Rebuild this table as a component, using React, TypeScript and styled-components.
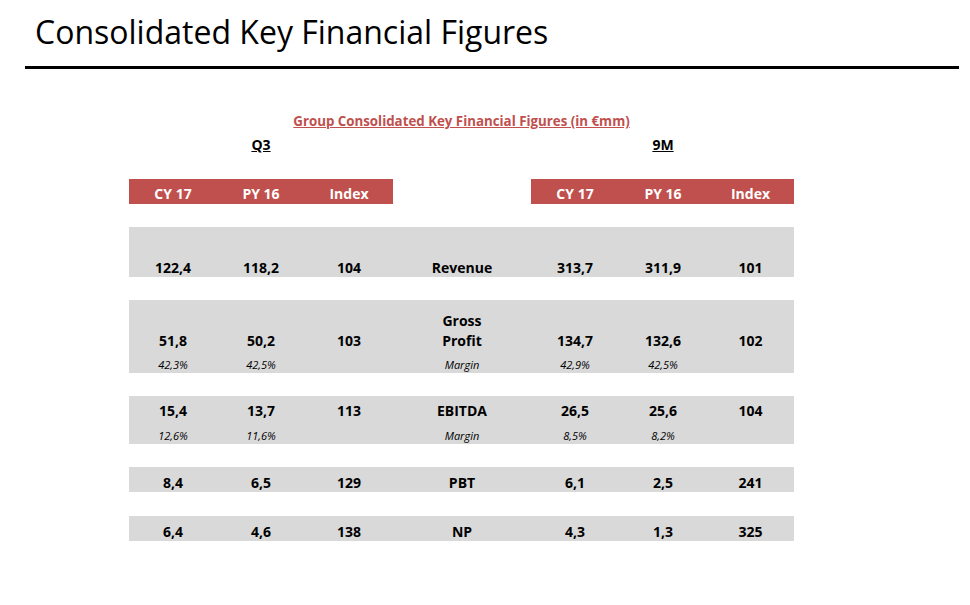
import styled, { createGlobalStyle } from "styled-components";

const RED = "#c0504d";
const GRAY = "#d9d9d9";
// 3 Q3 columns, label column, 3 9M columns
const COLS = "88px 88px 88px 138px 88px 88px 87px";

const GlobalStyle = createGlobalStyle`
  body {
    margin: 0;
    background: #fff;
    color: #000;
    font-family: "Open Sans", Lato, sans-serif;
  }
`;

const Page = styled.main`
  padding: 0 11px 40px 25px;
`;

const Title = styled.h1`
  margin: 0;
  padding: 16px 0 0 10px;
  font-size: 32px;
  font-weight: 400;
  line-height: 1;
`;

const Rule = styled.hr`
  margin: 18px 0 0;
  border: 0;
  height: 3px;
  background: #000;
`;

const Table = styled.section`
  width: 665px;
  margin-left: 104px;
`;

const Caption = styled.h2`
  margin: 45px 0 0;
  text-align: center;
  font-size: 13.3px;
  font-weight: 700;
  line-height: 14px;
  color: ${RED};
  text-decoration: underline;
`;

const Row = styled.div<{ $h: number; $gap?: number }>`
  display: grid;
  grid-template-columns: ${COLS};
  height: ${(p) => p.$h}px;
  margin-top: ${(p) => p.$gap ?? 0}px;
`;

const Period = styled.div<{ $col: number }>`
  grid-column: ${(p) => p.$col};
  text-align: center;
  font-size: 14px;
  font-weight: 700;
  line-height: 14px;
  text-decoration: underline;
`;

const HeadCell = styled.div<{ $fill: boolean }>`
  display: flex;
  align-items: flex-end;
  justify-content: center;
  padding-bottom: 3px;
  background: ${(p) => (p.$fill ? RED : "transparent")};
  color: #fff;
  font-size: 14px;
  font-weight: 700;
  line-height: 1;
`;

const Block = styled.div<{ $gap: number }>`
  margin-top: ${(p) => p.$gap}px;
  background: ${GRAY};
`;

const Cell = styled.div<{ $italic?: boolean }>`
  display: flex;
  align-items: flex-end;
  justify-content: center;
  padding-bottom: ${(p) => (p.$italic ? 3 : 2)}px;
  font-size: ${(p) => (p.$italic ? 11 : 14)}px;
  font-weight: ${(p) => (p.$italic ? 400 : 700)};
  font-style: ${(p) => (p.$italic ? "italic" : "normal")};
  color: #000;
  line-height: 1;
`;

type Line = { h: number; cells: string[]; italic?: boolean };

const heads = ["CY 17", "PY 16", "Index", "", "CY 17", "PY 16", "Index"];

const blocks: { gap: number; lines: Line[] }[] = [
  {
    gap: 23,
    lines: [
      { h: 25, cells: [] },
      { h: 25, cells: ["122,4", "118,2", "104", "Revenue", "313,7", "311,9", "101"] },
    ],
  },
  {
    gap: 23,
    lines: [
      { h: 30, cells: ["", "", "", "Gross", "", "", ""] },
      { h: 20, cells: ["51,8", "50,2", "103", "Profit", "134,7", "132,6", "102"] },
      { h: 23, italic: true, cells: ["42,3%", "42,5%", "", "Margin", "42,9%", "42,5%", ""] },
    ],
  },
  {
    gap: 23,
    lines: [
      { h: 24, cells: ["15,4", "13,7", "113", "EBITDA", "26,5", "25,6", "104"] },
      { h: 24, italic: true, cells: ["12,6%", "11,6%", "", "Margin", "8,5%", "8,2%", ""] },
    ],
  },
  {
    gap: 23,
    lines: [{ h: 25, cells: ["8,4", "6,5", "129", "PBT", "6,1", "2,5", "241"] }],
  },
  {
    gap: 24,
    lines: [{ h: 25, cells: ["6,4", "4,6", "138", "NP", "4,3", "1,3", "325"] }],
  },
];

export default function App() {
  return (
    <Page>
      <GlobalStyle />
      <Title>Consolidated Key Financial Figures</Title>
      <Rule />
      <Table>
        <Caption>Group Consolidated Key Financial Figures (in €mm)</Caption>
        <Row $h={14} $gap={10}>
          <Period $col={2}>Q3</Period>
          <Period $col={6}>9M</Period>
        </Row>
        <Row $h={25} $gap={27}>
          {heads.map((h, i) => (
            <HeadCell key={i} $fill={i !== 3}>
              {h}
            </HeadCell>
          ))}
        </Row>
        {blocks.map((b, bi) => (
          <Block key={bi} $gap={b.gap}>
            {b.lines.map((l, li) => (
              <Row key={li} $h={l.h}>
                {l.cells.map((c, ci) => (
                  <Cell key={ci} $italic={l.italic}>
                    {c}
                  </Cell>
                ))}
              </Row>
            ))}
          </Block>
        ))}
      </Table>
    </Page>
  );
}
